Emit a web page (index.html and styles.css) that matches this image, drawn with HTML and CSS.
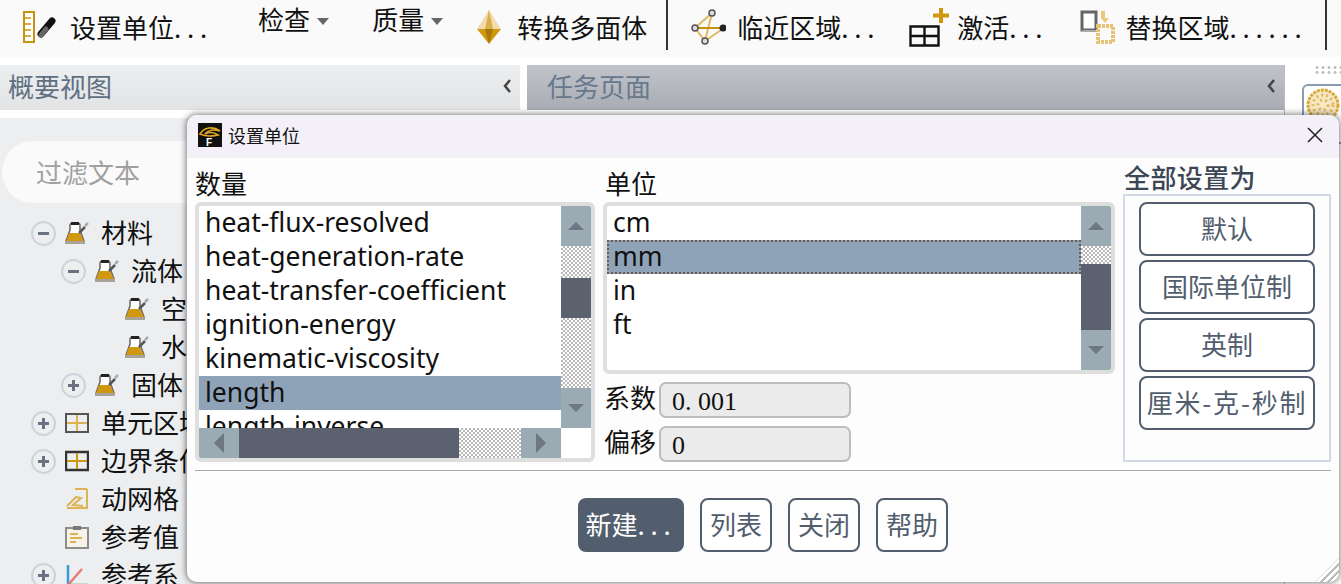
FILE: index.html
```html
<!DOCTYPE html>
<html lang="zh-CN">
	<head>
		<meta charset="UTF-8">
		<title>设置单位</title>
		<link rel="stylesheet" href="styles.css">
	</head>
	<body>
		<svg class="defs" width="0" height="0">
			<symbol id="flask" viewBox="0 0 24 24">
				<path d="M5 4c0-3 10-3 10 0v5l4 11H1L5 9z" fill="#fff" stroke="#666" stroke-width="1.500"/>
				<path d="M6 1h8v3H6z" fill="#222"/>
				<path d="M4 12h11l4 8H1z" fill="#cf980f"/>
				<path d="M0 20h20v3H0z" fill="#a7a39a"/>
				<path d="M14 12l6-6" stroke="#555" stroke-width="2.500"/>
				<path d="M20 5l3-3" stroke="#aaa" stroke-width="2.500"/>
			</symbol>
			<symbol id="cells" viewBox="0 0 24 20">
				<path d="M1 1h22v18H1z" fill="none" stroke="#555" stroke-width="2"/>
				<path d="M12 2v16M2 10h20" stroke="#dcb253" stroke-width="2"/>
			</symbol>
			<symbol id="cells-dark" viewBox="0 0 24 20">
				<path d="M1 1h22v18H1z" fill="none" stroke="#333" stroke-width="2.400"/>
				<path d="M12 2v16M2 10h20" stroke="#cf980f" stroke-width="2"/>
			</symbol>
		</svg>

		<header class="toolbar">
			<div class="tool">
				<svg class="tool-icon" width="35" height="32" viewBox="0 0 35 32">
					<path d="M1 1h10v30H1z" fill="#fff" stroke="#c8920f" stroke-width="2"/>
					<path d="M2 7h6M2 13h6M2 19h6M2 25h6" stroke="#c8920f" stroke-width="1.500"/>
					<path d="M18 23l11-13" stroke="#111" stroke-width="7" stroke-linecap="round"/>
					<path d="M18 24l5-6" stroke="#666" stroke-width="5" stroke-linecap="round"/>
				</svg>
				<span class="tool-text">设置单位<span class="dots">...</span></span>
			</div>
			<div class="tool tool-menu menu-check">检查<i class="caret"></i></div>
			<div class="tool tool-menu menu-quality">质量<i class="caret"></i></div>
			<div class="tool tool-poly">
				<svg width="26" height="34" viewBox="0 0 26 34">
					<path d="M13 0L1 19h24z" fill="#f0dcae"/>
					<path d="M13 0l-4 19h8z" fill="#dcae48"/>
					<path d="M1 19h24L13 34z" fill="#cf980f"/>
					<path d="M9 19h8l-4 15z" fill="#a8780a"/>
				</svg>
				<span class="tool-text">转换多面体</span>
			</div>
			<div class="tool-sep sep-a"></div>
			<div class="tool tool-near">
				<svg width="35" height="36" viewBox="0 0 35 36">
					<path d="M21 4L4 19M4 19l10 13L33 19M21 4L14 32" fill="none" stroke="#dfb95f" stroke-width="2"/>
					<path d="M4 19h29" stroke="#c8920f" stroke-width="2"/>
					<circle cx="21" cy="4" r="3" fill="#ddd" stroke="#555" stroke-width="1.500"/>
					<circle cx="4" cy="19" r="3" fill="#ddd" stroke="#555" stroke-width="1.500"/>
					<circle cx="14" cy="32" r="3" fill="#ddd" stroke="#555" stroke-width="1.500"/>
					<circle cx="32" cy="19" r="3.500" fill="#222"/>
				</svg>
				<span class="tool-text">临近区域<span class="dots">...</span></span>
			</div>
			<div class="tool tool-activate">
				<svg width="40" height="40" viewBox="0 0 40 40">
					<path d="M1.500 19.500h28v19h-28zM15.500 20v18M2 29h27" fill="none" stroke="#111" stroke-width="2.400"/>
					<path d="M32 1v15M24 8.500h16" stroke="#cf980f" stroke-width="4"/>
				</svg>
				<span class="tool-text">激活<span class="dots">...</span></span>
			</div>
			<div class="tool tool-replace">
				<svg width="37" height="34" viewBox="0 0 37 34">
					<path d="M2 2h14v18H2z" fill="#fff" stroke="#666" stroke-width="3"/>
					<path d="M2 21h16" stroke="#aaa" stroke-width="2"/>
					<path d="M21 1h4v7h4l-4 5-4-5z" fill="#ecc97a"/>
					<path d="M18 16h15v16H18z" fill="none" stroke="#e6c272" stroke-width="4" stroke-dasharray="3 1"/>
				</svg>
				<span class="tool-text">替换区域<span class="dots">......</span></span>
			</div>
			<div class="tool-sep sep-b"></div>
		</header>

		<main class="workspace">
			<aside class="outline">
				<div class="panel-head">
					<span>概要视图</span>
					<svg class="chevron" width="10" height="14" viewBox="0 0 10 14"><path d="M8 1L3 7l5 6" fill="none" stroke="#444" stroke-width="2.500"/></svg>
				</div>
				<div class="outline-body">
					<div class="filter">过滤文本</div>
					<ul class="tree">
						<li class="row l1"><i class="exp minus"></i><svg class="ticon"><use href="#flask"/></svg>材料</li>
						<li class="row l2"><i class="exp minus"></i><svg class="ticon"><use href="#flask"/></svg>流体</li>
						<li class="row l3"><i class="exp none"></i><svg class="ticon"><use href="#flask"/></svg>空气</li>
						<li class="row l3"><i class="exp none"></i><svg class="ticon"><use href="#flask"/></svg>水</li>
						<li class="row l2"><i class="exp plus"></i><svg class="ticon"><use href="#flask"/></svg>固体</li>
						<li class="row l1"><i class="exp plus"></i><svg class="ticon"><use href="#cells"/></svg>单元区域</li>
						<li class="row l1"><i class="exp plus"></i><svg class="ticon"><use href="#cells-dark"/></svg>边界条件</li>
						<li class="row l1"><i class="exp none"></i>
							<svg class="ticon" viewBox="0 0 24 24"><path d="M22 2H10M22 2v19H2M2 19l9-9 5 1-8 7 10 1" fill="none" stroke="#dcb253" stroke-width="2"/></svg>动网格</li>
						<li class="row l1"><i class="exp none"></i>
							<svg class="ticon" viewBox="0 0 24 24"><path d="M1 3h22v20H1z" fill="#f7f3e8" stroke="#8c8c8c" stroke-width="2"/><path d="M8 1h8v4H8z" fill="#777"/><path d="M5 9h8M5 13h12M5 17h6" stroke="#dcb253" stroke-width="2"/></svg>参考值</li>
						<li class="row l1"><i class="exp plus"></i>
							<svg class="ticon" viewBox="0 0 24 24"><path d="M3 2v20" stroke="#3a9bd9" stroke-width="2.500"/><path d="M3 22L17 6" stroke="#ec7a7a" stroke-width="2.500"/><path d="M3 22h20" stroke="#35a860" stroke-width="2.500"/></svg>参考系</li>
					</ul>
				</div>
			</aside>
			<section class="task">
				<div class="panel-head task-head">
					<span>任务页面</span>
					<svg class="chevron" width="10" height="14" viewBox="0 0 10 14"><path d="M8 1L3 7l5 6" fill="none" stroke="#444" stroke-width="2.500"/></svg>
				</div>
			</section>
			<aside class="strip">
				<div class="strip-dots"></div>
				<div class="strip-btn">
					<svg width="34" height="34" viewBox="0 0 34 34"><circle cx="17" cy="17" r="15" fill="#f6e8c4" stroke="#d9a93a" stroke-width="3" stroke-dasharray="3 1"/><circle cx="17" cy="17" r="10" fill="none" stroke="#e0b655" stroke-width="3" stroke-dasharray="2 3"/><circle cx="17" cy="17" r="5" fill="none" stroke="#e0b655" stroke-width="3" stroke-dasharray="2 3"/></svg>
				</div>
			</aside>
		</main>

		<div class="dialog">
			<div class="dialog-title">
				<svg class="app-logo" width="24" height="24" viewBox="0 0 24 24">
					<path d="M0 0h24v24H0z" fill="#111"/>
					<path d="M2 11c4-7 13-8 20-3-6-2-12-1-15 3 4-2 9-2 13 1-6 1-11 2-18-1z" fill="none" stroke="#e3a81f" stroke-width="1.600"/>
					<text x="8" y="23" font-size="10" font-weight="700" fill="#fff" font-family="Liberation Sans">F</text>
				</svg>
				<span class="dialog-name">设置单位</span>
				<svg class="dialog-close" width="16" height="16" viewBox="0 0 16 16"><path d="M1 1l14 14M15 1L1 15" stroke="#222" stroke-width="1.500"/></svg>
			</div>
			<div class="dialog-body">
				<div class="col-qty">
					<div class="label">数量</div>
					<div class="listbox qty-box">
						<ul class="items">
							<li>heat-flux-resolved</li>
							<li>heat-generation-rate</li>
							<li>heat-transfer-coefficient</li>
							<li>ignition-energy</li>
							<li>kinematic-viscosity</li>
							<li class="sel">length</li>
							<li>length-inverse</li>
						</ul>
						<div class="vbar">
							<div class="sb-btn"><i class="arr up"></i></div>
							<div class="track qty-t1"></div>
							<div class="thumb qty-thumb"></div>
							<div class="track grow"></div>
							<div class="sb-btn"><i class="arr down"></i></div>
						</div>
						<div class="hbar">
							<div class="sb-btn"><i class="arr left"></i></div>
							<div class="thumb qty-hthumb"></div>
							<div class="track grow"></div>
							<div class="sb-btn"><i class="arr right"></i></div>
						</div>
					</div>
				</div>
				<div class="col-unit">
					<div class="label">单位</div>
					<div class="listbox unit-box">
						<ul class="items">
							<li>cm</li>
							<li class="sel focus">mm</li>
							<li>in</li>
							<li>ft</li>
						</ul>
						<div class="vbar">
							<div class="sb-btn"><i class="arr up"></i></div>
							<div class="track unit-t1"></div>
							<div class="thumb grow"></div>
							<div class="sb-btn"><i class="arr down"></i></div>
						</div>
					</div>
					<div class="field"><span class="field-label">系数</span><div class="field-value">0. 001</div></div>
					<div class="field"><span class="field-label">偏移</span><div class="field-value">0</div></div>
				</div>
				<div class="col-set">
					<div class="label label-set">全部设置为</div>
					<div class="set-group">
						<button class="btn set-btn">默认</button>
						<button class="btn set-btn">国际单位制</button>
						<button class="btn set-btn">英制</button>
						<button class="btn set-btn set-long">厘米-克-秒制</button>
					</div>
				</div>
			</div>
			<div class="dialog-rule"></div>
			<div class="dialog-foot">
				<button class="btn primary">新建<span class="dots">...</span></button>
				<button class="btn">列表</button>
				<button class="btn">关闭</button>
				<button class="btn">帮助</button>
			</div>
			<div class="grip"></div>
		</div>
	</body>
</html>
```

FILE: styles.css
```css
*{
	box-sizing: border-box;
}
html,body{
	height:584px;
	overflow: hidden;
}
body{
	margin:0;
	background:#fff;
	color:#111;
	font:26px/30px "Noto Sans CJK SC","Noto Sans",sans-serif;
	position: relative;
}
ul{
	list-style: none;
	margin:0;
	padding:0;
}
.defs{
	position: absolute;
}
.dots{
	letter-spacing:5.8px;
}

/* toolbar */
.toolbar{
	height:57px;
	background:#fafafa;
	display:flex;
	align-items:center;
	padding:0 0 4px 23px;
}
.tool{
	display:flex;
	align-items:center;
	white-space:nowrap;
}
.tool-icon{
	margin-right:12px;
}
.tool-menu{
	margin-bottom:16px;
}
.menu-check{
	margin-left:45px;
}
.menu-quality{
	margin-left:43px;
}
.caret{
	width:0;
	height:0;
	margin:6px 0 0 7px;
	border:6px solid transparent;
	border-top:7px solid #666;
	border-bottom:0;
}
.tool-poly{
	margin-left:33px;
	gap:15px;
}
.tool-sep{
	width:2px;
	height:50px;
	background:#333;
	align-self:flex-start;
}
.sep-a{
	margin-left:19px;
}
.sep-b{
	margin-left:17px;
}
.tool-near{
	margin-left:23px;
	gap:11px;
}
.tool-activate{
	margin-left:29px;
	gap:8px;
}
.tool-replace{
	margin-left:32px;
	gap:8px;
}

/* panels behind the dialog */
.workspace{
	display:flex;
	margin-top:8px;
	height:519px;
}
.outline{
	width:520px;
}
.panel-head{
	height:45px;
	background:linear-gradient(#eceef0,#e2e3e5);
	display:flex;
	align-items:center;
	justify-content:space-between;
	padding:0 8px 4px;
	color:#5f7083;
}
.task-head{
	background:linear-gradient(#c0c4cb,#a9acb2);
	padding:0 8px 4px 20px;
	color:#68788c;
}
.outline-body{
	height:466px;
	margin-top:8px;
	background:#eceef0;
	padding-top:23px;
}
.filter{
	margin-left:2px;
	height:62px;
	border-radius:31px;
	background:#fafafa;
	color:#a0a0a0;
	padding:16px 34px;
}
.tree{
	margin-top:11px;
}
.row{
	height:38px;
	display:flex;
	align-items:center;
	padding-bottom:2px;
	white-space:nowrap;
}
.l1{
	padding-left:31px;
}
.l2{
	padding-left:61px;
}
.l3{
	padding-left:91px;
}
.exp{
	width:25px;
	height:25px;
	border-radius:50%;
	border:2px solid #cdd3da;
	margin:2px 9px 0 0;
	position: relative;
	flex:none;
}
.exp.none{
	border:0;
}
.minus::after,.plus::after,.plus::before{
	content:"";
	position: absolute;
	background:#6a7282;
	left:5px;
	top:9.500px;
	width:11px;
	height:2.500px;
}
.plus::before{
	left:9px;
	top:5.500px;
	width:2.500px;
	height:10.500px;
}
.ticon{
	width:24px;
	height:24px;
	margin:2px 12px 0 0;
	flex:none;
}
.task{
	width:758px;
	margin-left:7px;
	border-right:1px solid #bbb;
}
.strip{
	flex:1;
	padding:0 0 0 17px;
	overflow:hidden;
}
.strip-dots{
	height:10px;
	margin-left:12px;
	background:radial-gradient(circle,#c4c4c4 1.400px,transparent 1.700px) 0 0/6px 5px;
}
.strip-btn{
	width:60px;
	height:60px;
	margin-top:9px;
	border:2px solid #8d9cac;
	border-radius:6px;
	padding:2px;
	background:#fff;
}

/* dialog */
.dialog{
	position: absolute;
	left:187px;
	top:115px;
	width:1152px;
	height:467px;
	background:#fdfdfd;
	border-radius:10px;
	box-shadow:0 0 6px 1px rgba(0,0,0,.5);
	overflow:hidden;
}
.dialog-title{
	height:43px;
	background:#f4f0f8;
	display:flex;
	align-items:center;
	padding:0 16px 4px 11px;
}
.app-logo{
	margin-right:6px;
}
.dialog-name{
	flex:1;
	font-size:18px;
}
.dialog-body{
	height:312px;
	padding-left:8px;
	display:flex;
}
.label{
	margin:10px 0 4px 0;
}
.label-set{
	margin:4px 0 2px 1px;
	font-weight:500;
	color:#3c4654;
	letter-spacing:.4px;
}
.col-qty{
	width:400px;
}
.col-unit{
	width:512px;
	margin-left:8px;
}
.col-set{
	width:208px;
	margin-left:8px;
}
.col-unit .label{
	margin-left:2px;
}
.listbox{
	border:4px solid #dedede;
	border-radius:6px;
	background:#fff;
	display:grid;
	grid-template-columns:1fr 30px;
	overflow:hidden;
	font-family:"Noto Sans",sans-serif;
	font-size:26.500px;
}
.qty-box{
	height:260px;
	grid-template-rows:222px 30px;
}
.unit-box{
	height:172px;
}
.items{
	overflow:hidden;
	min-width:0;
}
.items li{
	height:34px;
	line-height:33px;
	padding-left:6px;
	white-space:nowrap;
}
.items .sel{
	background:#8ea3b8;
}
.items .focus{
	border:2px dotted #6b5a50;
	line-height:29px;
	padding-left:4px;
}
.vbar{
	display:flex;
	flex-direction:column;
}
.hbar{
	display:flex;
}
.sb-btn{
	flex:none;
	width:30px;
	height:40px;
	background:#9babb4;
	display:flex;
	align-items:center;
	justify-content:center;
}
.hbar .sb-btn{
	width:40px;
	height:30px;
}
.track{
	background:repeating-conic-gradient(#b8b8b8 0 25%,#fff 0 50%) 0 0/4px 4px;
}
.thumb{
	background:#5c6170;
}
.grow{
	flex:1;
}
.qty-t1{
	height:32px;
}
.qty-thumb{
	height:40px;
}
.qty-hthumb{
	width:220px;
}
.unit-t1{
	height:18px;
}
.arr{
	width:0;
	height:0;
	border:8px solid transparent;
}
.arr.up{
	border-top:0;
	border-bottom:8px solid #6e7884;
}
.arr.down{
	border-bottom:0;
	border-top:8px solid #6e7884;
}
.arr.left{
	border-width:10px 10px 10px 0;
	border-right-color:#6e7884;
}
.arr.right{
	border-width:10px 0 10px 10px;
	border-left-color:#6e7884;
}
.field{
	display:flex;
	align-items:center;
	margin-top:8px;
}
.field-label{
	width:56px;
	padding:0 0 6px 1px;
	flex:none;
}
.field-value{
	width:192px;
	height:36px;
	border:2px solid #bdbdbd;
	border-radius:7px;
	background:#ebebeb;
	padding:3px 11px 0;
	font-family:"Liberation Serif",serif;
	white-space:pre;
}
.set-group{
	height:268px;
	border:2px solid #d3d9e6;
	padding:6px 14px;
	display:flex;
	flex-direction:column;
	gap:4px;
}
.btn{
	font:inherit;
	height:54px;
	padding:0 8px 2px;
	border:2px solid #525e6e;
	border-radius:8px;
	background:#fff;
	color:#525e6e;
	white-space:nowrap;
}
.set-btn{
	width:176px;
	padding:0 0 2px;
}
.set-long{
	letter-spacing:1.800px;
}
.primary{
	width:106px;
	padding:0 0 2px;
	background:#525e6e;
	color:#fff;
}
.dialog-rule{
	height:1px;
	margin:0 8px;
	background:#aaa;
}
.dialog-foot{
	display:flex;
	justify-content:center;
	gap:16px;
	margin-top:27px;
}
.grip{
	position: absolute;
	right:0;
	bottom:0;
	width:24px;
	height:24px;
	background:repeating-linear-gradient(135deg,#bbb 0 2px,#fff 2px 5px);
	clip-path:polygon(100% 0,100% 100%,0 100%);
}
```
